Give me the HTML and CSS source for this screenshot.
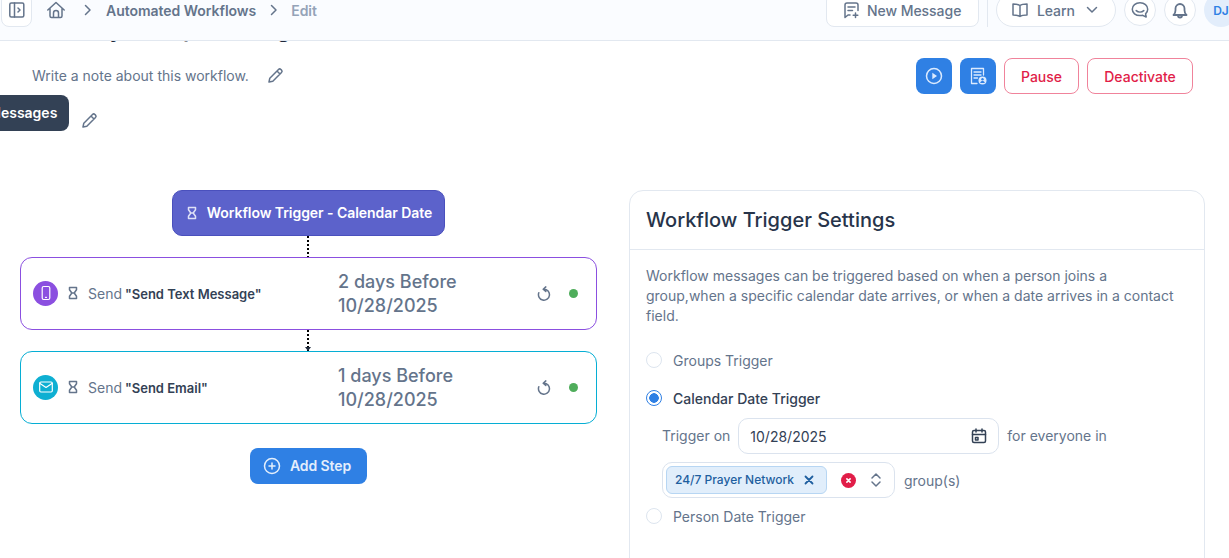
FILE: index.html
```html
<!DOCTYPE html>
<html lang="en">
<head>
<meta charset="utf-8">
<title>Edit Workflow</title>
<link rel="stylesheet" href="styles.css">
</head>
<body>
<header class="topbar">
  <button class="side-toggle"><svg class="i18" viewBox="0 0 18 18"><rect x="1.800" y="2" width="14" height="14" rx="1.500"/><path d="M6.500 2v14M10 7l2 2-2 2"/></svg></button>
  <svg class="home" viewBox="0 0 20 20"><path d="M1.800 10 10 2.500 18.200 10M4 8.200V16a1.500 1.500 0 0 0 1.500 1.500h9A1.500 1.500 0 0 0 16 16V8.200M7.500 17.500V13a2.500 2.500 0 0 1 5 0v4.500"/></svg>
  <svg class="crumb-sep" viewBox="0 0 10 14"><path d="M2.500 2.500 7 7l-4.500 4.500"/></svg>
  <span class="crumb">Automated Workflows</span>
  <svg class="crumb-sep second" viewBox="0 0 10 14"><path d="M2.500 2.500 7 7l-4.500 4.500"/></svg>
  <span class="crumb current">Edit</span>
  <div class="top-actions">
    <button class="new-msg"><svg class="i18" viewBox="0 0 18 18"><path d="M8 14H6l-3 2.500V4a2 2 0 0 1 2-2h9a2 2 0 0 1 2 2v5.500M6 6h7M6 9.500h4.500M13.500 12v4.500M11.200 14.200h4.600"/></svg>New Message</button>
    <span class="divider"></span>
    <button class="learn"><svg class="i18" viewBox="0 0 18 18"><path d="M9 4.500C7.500 3.300 5 3 2 3v11c3 0 5.500.3 7 1.500 1.500-1.200 4-1.500 7-1.500V3c-3 0-5.500.3-7 1.500ZM9 4.500v11"/></svg>Learn<svg class="learn-caret" viewBox="0 0 12 8"><path d="M1.500 1.500 6 6l4.500-4.500"/></svg></button>
    <button class="round"><svg class="i18" viewBox="0 0 18 18"><path d="M9 1.800c4.400 0 7.700 2.700 7.700 6.500 0 1.900-.8 3.400-2.100 4.600l.6 3.100-3.500-1.700c-.8.200-1.700.3-2.700.3-4.400 0-7.700-2.600-7.700-6.300S4.600 1.800 9 1.800Z"/><path d="M5.200 9.600c2.100 1.800 5.500 1.800 7.600 0"/></svg></button>
    <button class="round"><svg class="i18 bell" viewBox="0 0 18 18"><path d="M2.500 14h13c-1.300-1.300-2-2.700-2-4.800V7.500a4.500 4.500 0 0 0-9 0v1.700c0 2.100-.7 3.500-2 4.800ZM7 14v.5a2 2 0 0 0 4 0V14"/></svg></button>
    <span class="avatar">DJ</span>
  </div>
</header>

<main>
  <section class="head">
    <div class="head-left">
      <h1 class="title">Monthly Group Message</h1>
      <div class="note"><span>Write a note about this workflow.</span><svg class="pencil" viewBox="0 0 18 18"><path d="M3 15l.8-3.800L12.500 2.500a1.700 1.700 0 0 1 2.400 0l.6.6a1.700 1.700 0 0 1 0 2.400L6.800 14.200 3 15ZM11 4l3 3"/></svg></div>
      <div class="tag-row"><span class="dark-tag">Messages</span><svg class="pencil low" viewBox="0 0 18 18"><path d="M3 15l.8-3.800L12.500 2.500a1.700 1.700 0 0 1 2.400 0l.6.6a1.700 1.700 0 0 1 0 2.400L6.800 14.200 3 15ZM11 4l3 3"/></svg></div>
    </div>
    <div class="head-actions">
      <button class="icon-btn"><svg class="i20" viewBox="0 0 20 20"><circle cx="10" cy="10" r="7.500"/><path class="fill" d="M8.300 6.800v6.400l4.700-3.200z"/></svg></button>
      <button class="icon-btn"><svg class="i20 doc" viewBox="0 0 20 20"><path d="M15.500 9V2.500h-12v15H9M6 6h7M6 9h7M6 12h3.500"/><circle class="fill" cx="14.500" cy="14.500" r="4"/><circle class="hole" cx="14.500" cy="13.300" r="1.200"/><path class="hole" d="M12.200 17c.3-1.300 1.200-1.900 2.300-1.900s2 .6 2.300 1.900z"/></svg></button>
      <button class="outline-btn pause">Pause</button>
      <button class="outline-btn deactivate">Deactivate</button>
    </div>
  </section>

  <section class="columns">
    <div class="flow">
      <div class="trigger"><svg class="glass" viewBox="0 0 14 14"><path d="M3.500 1.500h7v2.200L8.200 7l2.300 3.300v2.200h-7v-2.200L5.800 7 3.500 3.700zM5.800 7h2.400"/></svg><span>Workflow Trigger - Calendar Date</span></div>
      <div class="link"></div>
      <div class="step purple">
        <div class="step-main">
          <span class="badge bg-purple"><svg viewBox="0 0 16 16"><rect x="4.200" y="1.500" width="7.600" height="13" rx="1.500"/><path d="M7.500 12.300h1"/></svg></span>
          <svg class="glass" viewBox="0 0 14 14"><path d="M3.500 1.500h7v2.200L8.200 7l2.300 3.300v2.200h-7v-2.200L5.800 7 3.500 3.700zM5.800 7h2.400"/></svg>
          <span class="send">Send <b>"Send Text Message"</b></span>
        </div>
        <div class="when">2 days Before<br>10/28/2025</div>
        <svg class="redo" viewBox="0 0 16 16"><path d="M8 3.200a5.500 5.500 0 1 1-5.200 3.600M9.800.9 7.200 3.200l2.600 2.300"/></svg>
        <span class="status"></span>
      </div>
      <div class="link arrow"></div>
      <div class="step cyan">
        <div class="step-main">
          <span class="badge bg-cyan"><svg viewBox="0 0 16 16"><rect x="1.700" y="3" width="12.600" height="10" rx="1.200"/><path d="M2 4.500 8 8.500l6-4"/></svg></span>
          <svg class="glass" viewBox="0 0 14 14"><path d="M3.500 1.500h7v2.200L8.200 7l2.300 3.300v2.200h-7v-2.200L5.800 7 3.500 3.700zM5.800 7h2.400"/></svg>
          <span class="send">Send <b>"Send Email"</b></span>
        </div>
        <div class="when">1 days Before<br>10/28/2025</div>
        <svg class="redo" viewBox="0 0 16 16"><path d="M8 3.200a5.500 5.500 0 1 1-5.200 3.600M9.800.9 7.200 3.200l2.600 2.300"/></svg>
        <span class="status"></span>
      </div>
      <button class="add-step"><svg class="i18" viewBox="0 0 18 18"><circle cx="9" cy="9" r="7.500"/><path d="M9 6v6M6 9h6"/></svg><span>Add Step</span></button>
    </div>

    <aside class="settings">
      <h2>Workflow Trigger Settings</h2>
      <div class="settings-body">
        <p>Workflow messages can be triggered based on when a person joins a group,when a specific calendar date arrives, or when a date arrives in a contact field.</p>
        <div class="option first"><span class="radio"></span>Groups Trigger</div>
        <div class="option active"><span class="radio on"></span>Calendar Date Trigger</div>
        <div class="line date-line">
          <span class="nudge">Trigger on</span>
          <div class="date-input">10/28/2025<svg class="i18" viewBox="0 0 18 18"><rect x="2.500" y="3.500" width="13" height="12" rx="1.500"/><path d="M2.500 7.500h13M6 2v3M12 2v3M5.500 10.500h2.500v2.500H5.500z"/></svg></div>
          <span class="nudge">for everyone in</span>
        </div>
        <div class="line group-line">
          <div class="select">
            <span class="chip">24/7 Prayer Network<svg viewBox="0 0 10 10"><path d="M1.500 1.500l7 7M8.500 1.500l-7 7"/></svg></span>
            <span class="clear"><svg viewBox="0 0 10 10"><path d="M3.200 3.200l3.600 3.600M6.800 3.200 3.200 6.800"/></svg></span>
            <svg class="updown" viewBox="0 0 12 18"><path d="M2 7l4-4 4 4M2 11l4 4 4-4"/></svg>
          </div>
          <span>group(s)</span>
        </div>
        <div class="option last"><span class="radio"></span>Person Date Trigger</div>
      </div>
    </aside>
  </section>
</main>
</body>
</html>
```
FILE: styles.css
```css
* { box-sizing: border-box; }
html, body { height: 100%; }
body { margin: 0; overflow: hidden; background: #fff; font-family: Inter, "Liberation Sans", sans-serif; color: #64748b; font-size: 14px; }
button { font: inherit; color: inherit; background: #fff; cursor: pointer; }
svg { fill: none; stroke: currentColor; stroke-width: 1.500; stroke-linecap: round; stroke-linejoin: round; flex: none; display: block; }
.i18 { width: 18px; height: 18px; }
.i20 { width: 20px; height: 20px; }

/* top bar */
.topbar { position: relative; z-index: 2; height: 61px; margin-top: -20px; display: flex; align-items: center; padding-left: 1px; background: #fafcff; border-bottom: 1px solid #e2e8f0; }
.side-toggle { width: 31px; height: 34px; padding: 0; display: flex; align-items: center; justify-content: center; border: 1px solid #e2e8f0; border-radius: 8px; color: #64748b; }
.home { width: 20px; height: 20px; margin-left: 14px; color: #64748b; }
.crumb-sep { width: 10px; height: 14px; margin-left: 17px; color: #64748b; }
.crumb-sep.second { margin-left: 13px; }
.crumb { margin-left: 13px; font-weight: 600; color: #64748b; letter-spacing: -.03px; }
.crumb.current { margin-left: 12px; color: #94a3b8; }
.top-actions { margin-left: auto; display: flex; align-items: center; }
.new-msg { width: 153px; height: 34px; padding: 0 0 0 15px; display: flex; align-items: center; gap: 7px; border: 1px solid #e2e8f0; border-radius: 8px; font-weight: 500; letter-spacing: -.05px; }
.divider { width: 1px; height: 34px; background: #e2e8f0; margin: 0 8px; }
.learn { width: 120px; height: 34px; padding: 0 0 0 14px; display: flex; align-items: center; gap: 8px; border: 1px solid #e2e8f0; border-radius: 17px; font-weight: 500; letter-spacing: -.1px; }
.learn-caret { width: 12px; height: 8px; margin-left: 3px; }
.round { width: 32px; height: 32px; padding: 0; margin-left: 8px; display: flex; align-items: center; justify-content: center; border: 1px solid #e2e8f0; border-radius: 50%; color: #64748b; }
.bell { stroke-width: 1.800; }
.avatar { width: 34px; height: 34px; margin-left: 8px; margin-right: -9px; border-radius: 50%; background: #e2edfb; color: #2f80e4; font-size: 12px; font-weight: 600; display: flex; align-items: center; justify-content: center; }

/* page head */
.head { display: flex; justify-content: space-between; align-items: flex-start; padding: 0 36px 0 32px; }
.title { margin: -26px 0 0; height: 31px; font-size: 23px; line-height: 28px; font-weight: 600; color: #1e293b; white-space: nowrap; }
.note { height: 24px; margin-top: 18px; display: flex; align-items: center; gap: 17px; }
.note span { margin-top: -2px; }
.pencil { width: 18px; height: 18px; color: #64748b; }
.tag-row { margin: 7px 0 0 -56px; height: 36px; display: flex; align-items: center; gap: 11px; }
.dark-tag { height: 36px; padding: 0 12px 1px; display: flex; align-items: center; border-radius: 0 8px 8px 0; background: #334155; color: #fff; font-weight: 600; }
.pencil.low { margin-top: 15px; }
.head-actions { display: flex; gap: 8px; margin-top: 17px; }
.icon-btn { width: 36px; height: 36px; padding: 0; display: flex; align-items: center; justify-content: center; border: 0; border-radius: 8px; background: #2f80e4; color: #dbeafe; }
.icon-btn .fill { fill: #dbeafe; stroke: none; }
.icon-btn .hole { fill: #2f80e4; stroke: none; }
.doc { stroke-width: 1.300; }
.outline-btn { height: 36px; padding: 0; border: 1px solid #f0839b; border-radius: 8px; color: #e11d48; font-weight: 500; }
.pause { width: 75px; }
.deactivate { width: 106px; }

/* columns */
.columns { display: flex; align-items: flex-start; gap: 32px; margin-top: 59px; padding: 0 24px 0 20px; }
.flow { width: 577px; flex: none; display: flex; flex-direction: column; align-items: center; }
.trigger { width: 273px; height: 46px; padding-bottom: 1px; display: flex; align-items: center; justify-content: center; gap: 8px; background: #5c62cb; border: 1px solid #4a50bd; border-radius: 10px; color: #fff; font-weight: 600; letter-spacing: -.06px; }
.trigger .glass { color: #dfe1f7; }
.glass { width: 14px; height: 14px; color: #64748b; }
.link { width: 2px; height: 21px; background-image: linear-gradient(#000 60%, transparent 60%); background-size: 2px 4px; margin-left: -1px; position: relative; }
.arrow::after { content: ""; position: absolute; left: -2px; bottom: 0; border: 3px solid transparent; border-top: 4px solid #1e293b; border-bottom: 0; }
.step { width: 100%; height: 73px; display: flex; align-items: center; padding-left: 12px; border: 1px solid; border-radius: 12px; }
.purple { border-color: #8b4fe0; }
.cyan { border-color: #06aed4; }
.step-main { width: 305px; flex: none; display: flex; align-items: center; gap: 8px; margin-top: -1px; }
.badge { width: 25px; height: 25px; flex: none; border-radius: 50%; display: flex; align-items: center; justify-content: center; color: #fff; }
.badge svg { width: 16px; height: 16px; stroke-width: 1.200; }
.bg-purple { background: #8b4fe0; }
.bg-cyan { background: #0eafd2; }
.send { white-space: nowrap; }
.send b { font-size: 13px; font-weight: 600; color: #334155; margin-left: -1px; }
.when { width: 198px; flex: none; font-size: 18px; line-height: 24px; font-weight: 500; color: #64748b; }
.redo { width: 16px; height: 16px; color: #64748b; }
.status { width: 9px; height: 9px; margin-left: 17px; border-radius: 50%; background: #4fad5b; }
.add-step { width: 117px; height: 36px; margin-top: 24px; padding: 0 3px 1px 0; display: flex; align-items: center; justify-content: center; gap: 9px; border: 0; border-radius: 8px; background: #2f80e4; color: #e3eefc; font-weight: 600; letter-spacing: -.1px; }

/* settings card */
.settings { width: 576px; flex: none; min-height: 420px; border: 1px solid #e2e8f0; border-radius: 14px; }
.settings h2 { margin: 0; height: 59px; padding-left: 16px; display: flex; align-items: center; font-size: 20px; font-weight: 500; color: #27344a; border-bottom: 1px solid #e2e8f0; }
.settings-body { padding: 16px 16px 0; }
.settings p { margin: 0; line-height: 20px; }
.option { display: flex; align-items: center; gap: 11px; height: 20px; }
.option.first { margin-top: 24px; }
.option.active { margin-top: 18px; color: #334155; font-weight: 500; }
.option.last { margin-top: 8px; }
.radio { width: 16px; height: 16px; flex: none; border: 1.500px solid #dde5ef; border-radius: 50%; background: #fff; }
.radio.on { border-color: #2f80e4; background: radial-gradient(circle, #2f80e4 0 4.500px, #fff 5px); }
.line { display: flex; align-items: center; margin-left: 16px; }
.nudge { margin-top: -2px; }
.date-line { margin-top: 10px; gap: 8px; }
.date-input { width: 261px; height: 36px; padding: 0 10px 0 11px; display: flex; align-items: center; justify-content: space-between; border: 1px solid #dbe3ee; border-radius: 10px; color: #334155; }
.group-line { margin-top: 8px; gap: 9px; }
.select { width: 233px; height: 36px; padding-left: 3px; display: flex; align-items: center; border: 1px solid #dbe3ee; border-radius: 10px; }
.chip { width: 161px; height: 28px; padding: 0 12px 1px 8px; display: flex; align-items: center; justify-content: space-between; background: #e1eefb; border: 1px solid #b7d6f3; border-radius: 6px; color: #1f5f9f; font-size: 12px; font-weight: 500; }
.chip svg { width: 10px; height: 10px; stroke-width: 1.800; }
.clear { width: 15px; height: 15px; margin-left: 14px; display: flex; align-items: center; justify-content: center; border-radius: 50%; background: #e11d48; color: #fff; }
.clear svg { width: 9px; height: 9px; stroke-width: 1.800; }
.updown { width: 12px; height: 18px; margin-left: 14px; color: #64748b; }
```
